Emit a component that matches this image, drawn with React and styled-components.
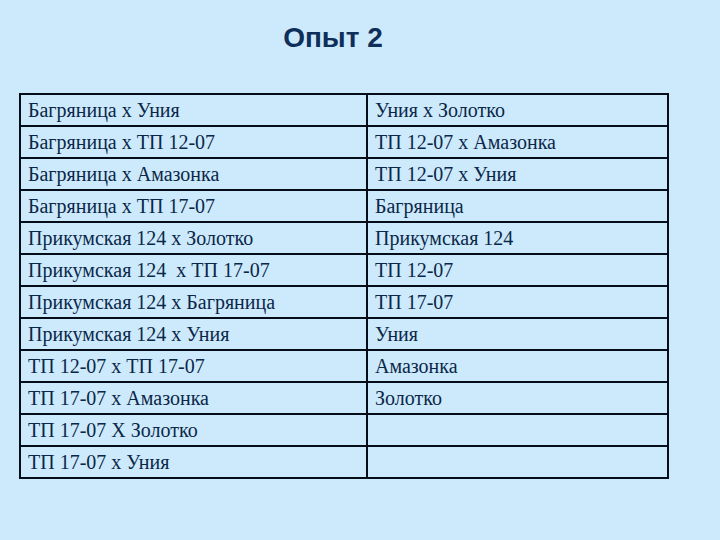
import React from "react";
import styled, { createGlobalStyle } from "styled-components";

const Global = createGlobalStyle`
  html, body {
    margin: 0;
    padding: 0;
    background: #cdeafc;
  }
`;

const Page = styled.div`
  width: 720px;
  height: 540px;
  box-sizing: border-box;
  padding: 20px 0 0 19px;
  background: #cdeafc;
`;

const Title = styled.h1`
  margin: 0;
  width: 628px;
  height: 73px;
  text-align: center;
  font-family: "Liberation Sans", Arial, sans-serif;
  font-weight: bold;
  font-size: 28px;
  line-height: 36px;
  color: #0d2f5a;
`;

const Table = styled.table`
  border-collapse: collapse;
  width: 648px;
  table-layout: fixed;
  font-family: "Liberation Serif", "Times New Roman", serif;
  font-size: 20px;
  color: #0b2748;
`;

const Col = styled.col`
  width: ${(p) => p.$w}px;
`;

const Cell = styled.td`
  border: 2px solid #050d18;
  height: 30px;
  padding: 0 0 0 7px;
  white-space: pre;
  vertical-align: middle;
  line-height: 22px;
`;

const rows = [
  ["Багряница х Уния", "Уния х Золотко"],
  ["Багряница х ТП 12-07", "ТП 12-07 х Амазонка"],
  ["Багряница х Амазонка", "ТП 12-07 х Уния"],
  ["Багряница х ТП 17-07", "Багряница"],
  ["Прикумская 124 х Золотко", "Прикумская 124"],
  ["Прикумская 124  х ТП 17-07", "ТП 12-07"],
  ["Прикумская 124 х Багряница", "ТП 17-07"],
  ["Прикумская 124 х Уния", "Уния"],
  ["ТП 12-07 х ТП 17-07", "Амазонка"],
  ["ТП 17-07 х Амазонка", "Золотко"],
  ["ТП 17-07 Х Золотко", ""],
  ["ТП 17-07 х Уния", ""],
];

export default function App() {
  return (
    <>
      <Global />
      <Page>
        <Title>Опыт 2</Title>
        <Table>
          <colgroup>
            <Col $w={347} />
            <Col $w={301} />
          </colgroup>
          <tbody>
            {rows.map(([a, b], i) => (
              <tr key={i}>
                <Cell>{a}</Cell>
                <Cell>{b}</Cell>
              </tr>
            ))}
          </tbody>
        </Table>
      </Page>
    </>
  );
}
